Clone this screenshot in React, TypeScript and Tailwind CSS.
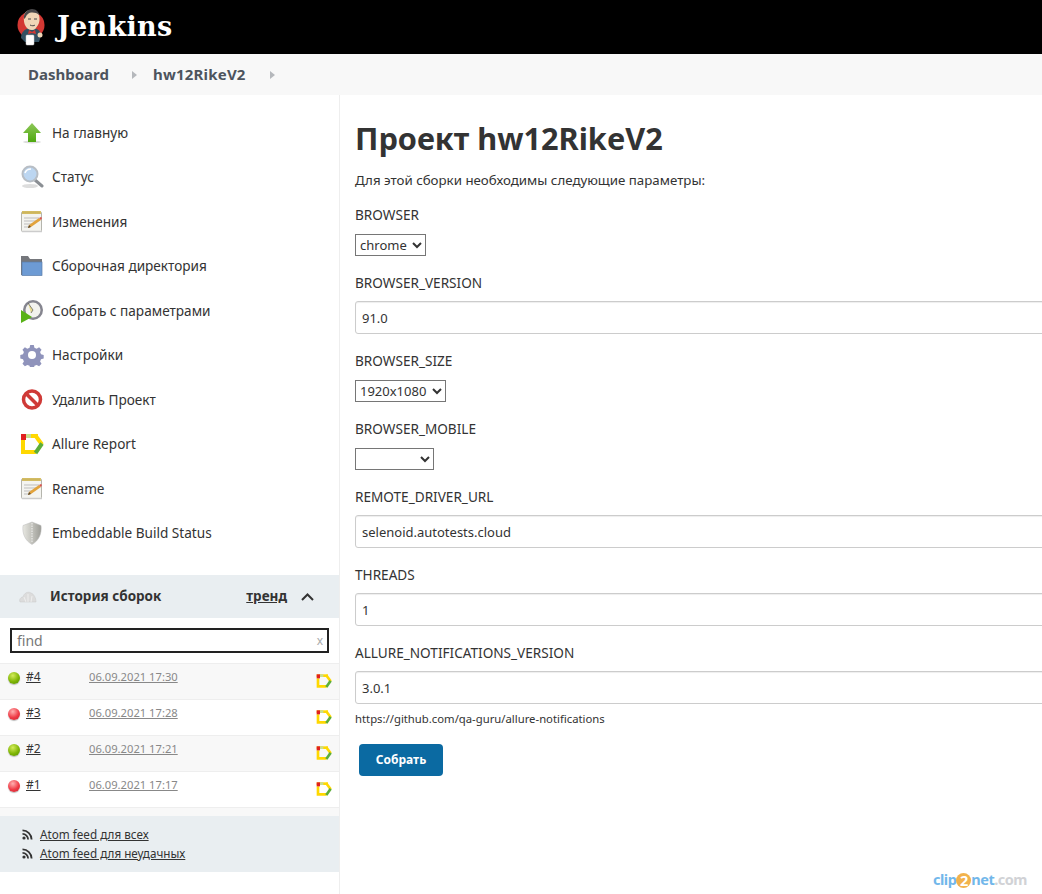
import React from "react";

const font = { fontFamily: '"Noto Sans", "Open Sans", sans-serif' };

const JenkinsLogo = () => (
  <svg width="30" height="38" viewBox="0 0 30 38">
    <circle cx="15" cy="17" r="13.5" fill="#d33833" />
    <path d="M5 30c0-6 4-9 8-10l8 1c3 2 4 4 4 7l-2 6H9z" fill="#335061" />
    <path d="M9 5c2-4 10-4 13 0 2 3 2 9 0 12-2 3-3 5-6 5-3 0-6-2-7-5-1-2-2-8 0-12z" fill="#f0d6b7" />
    <path d="M8 11C7 5 12 1 16 1c4 0 7 3 7 6-3-3-9-3-11-1-2 1-2 4-4 5z" fill="#49484a" />
    <path d="M13 22l3 2 3-2 1 4-4-1-4 1z" fill="#d33833" />
    <path d="M12 11h3M18 11h3M14 17c2 1 4 1 5 0" stroke="#49484a" strokeWidth="1" fill="none" />
    <rect x="10" y="27" width="8" height="10" rx="1" fill="#fff" stroke="#ccc" strokeWidth=".5" />
    <circle cx="24" cy="27" r="2.5" fill="#f0d6b7" />
  </svg>
);

const ArrowIcon = () => (
  <svg width="24" height="24" viewBox="0 0 24 24">
    <defs>
      <linearGradient id="arrowGrad" x1="0" y1="0" x2="0" y2="1">
        <stop offset="0" stopColor="#8fc85a" />
        <stop offset="1" stopColor="#4ea80f" />
      </linearGradient>
    </defs>
    <ellipse cx="12" cy="21" rx="9" ry="1.5" fill="#ddd" />
    <path d="M12 2l9 10h-5v9H8v-9H3z" fill="url(#arrowGrad)" />
  </svg>
);

const SearchIcon = () => (
  <svg width="24" height="24" viewBox="0 0 24 24">
    <ellipse cx="10" cy="21" rx="8" ry="2" fill="#ddd" />
    <path d="M15 15l7 6" stroke="#8b8f94" strokeWidth="3" strokeLinecap="round" />
    <circle cx="10" cy="9" r="7.5" fill="#bcd6f1" stroke="#b8bec5" strokeWidth="2" />
    <path d="M5 8c1-3 4-4 6-4" stroke="#fff" strokeWidth="1.5" fill="none" />
  </svg>
);

const NotepadIcon = () => (
  <svg width="24" height="24" viewBox="0 0 24 24">
    <rect x="1.5" y="2" width="20" height="19.500" rx="1" fill="#f4f4f0" stroke="#b5b5ad" />
    <rect x="2" y="1" width="19" height="3" fill="#d9c26a" />
    <path d="M3 1.500v2M5 1.500v2M7 1.500v2M9 1.500v2M11 1.500v2M13 1.500v2M15 1.500v2M17 1.500v2M19 1.500v2" stroke="#a8923f" strokeWidth=".5" />
    <path d="M4 8h15M4 11h12M4 14h8M4 17h6" stroke="#bdbdbd" strokeWidth="1" />
    <path d="M8 18l1-3L19 8l2 2-10 7z" fill="#e2a33c" />
    <path d="M19 8l2 2 1-2-1-1z" fill="#d9534f" />
    <path d="M8 18l1-3 2 2z" fill="#5a4a32" />
    <path d="M2 21.500h20" stroke="#ccc" strokeWidth="1.500" />
  </svg>
);

const FolderIcon = () => (
  <svg width="24" height="24" viewBox="0 0 24 24">
    <path d="M1 2h7l2 3h12v16H1z" fill="#75777c" />
    <rect x="2" y="8" width="20" height="13.500" fill="#6d9bd4" stroke="#5b7da8" strokeWidth=".7" />
  </svg>
);

const ClockIcon = () => (
  <svg width="24" height="24" viewBox="0 0 24 24">
    <circle cx="13" cy="11" r="10" fill="#85858f" />
    <circle cx="13" cy="11" r="7.5" fill="#f2f2ee" />
    <path d="M8 4l5 7-2 3" fill="#e9dc8f" stroke="#555" strokeWidth=".7" />
    <path d="M1 11l11 7-11 6z" fill="#58b217" />
  </svg>
);

const GearIcon = () => (
  <svg width="24" height="24" viewBox="0 0 24 24">
    <path
      d="M10 1h4l.7 3 2.5 1 2.700-1.600 2.700 2.800-1.600 2.600 1 2.500 3 .7v4l-3 .7-1 2.500 1.600 2.600-2.700 2.800-2.700-1.600-2.500 1-.7 3h-4l-.7-3-2.500-1-2.700 1.600-2.700-2.800 1.600-2.600-1-2.500-3-.7v-4l3-.7 1-2.500-1.600-2.600 2.700-2.800 2.700 1.600 2.500-1z"
      fill="#8f93bb"
      transform="translate(1.200 1.200) scale(.9)"
    />
    <circle cx="12" cy="12" r="4" fill="#fff" />
  </svg>
);

const NoIcon = () => (
  <svg width="24" height="24" viewBox="0 0 24 24">
    <circle cx="12" cy="11.500" r="8.500" fill="#fff" stroke="#cf3a37" strokeWidth="3.500" />
    <path d="M6 5.500l12 12" stroke="#cf3a37" strokeWidth="3.500" />
  </svg>
);

const AllureIcon = ({ size = 24 }: { size?: number }) => (
  <svg width={size} height={size} viewBox="0 0 24 24">
    <path d="M1 4h15l2 0" fill="none" stroke="#ffd800" strokeWidth="4" />
    <path d="M6 4h5" fill="none" stroke="#c9dd8e" strokeWidth="4" />
    <path d="M15 3l7 9.500" fill="none" stroke="#ffd800" strokeWidth="4" />
    <path d="M3 8v12h13" fill="none" stroke="#ffd800" strokeWidth="4" />
    <path d="M22 11.500l-6.500 9.500" fill="none" stroke="#5cae3a" strokeWidth="4" />
    <rect x="1" y="2" width="5" height="6" fill="#e02020" />
  </svg>
);

const ShieldIcon = () => (
  <svg width="24" height="24" viewBox="0 0 24 24">
    <defs>
      <linearGradient id="shieldGrad" x1="0" y1="0" x2="1" y2="0">
        <stop offset="0" stopColor="#e8e8e2" />
        <stop offset="1" stopColor="#9c9c96" />
      </linearGradient>
    </defs>
    <path d="M12 1l9 3.500c1 8-2 15-9 19-7-4-10-11-9-19z" fill="url(#shieldGrad)" stroke="#bbb" strokeWidth=".5" />
    <path d="M12 2v20" stroke="#fff" strokeWidth=".8" strokeDasharray="1.500 1" />
  </svg>
);

const CloudIcon = () => (
  <svg width="18" height="14" viewBox="0 0 18 14">
    <path d="M1 12c-1-3 1-5 3-5 1-4 5-6 8-4 3 1 5 5 5 9z" fill="#dcdcdc" stroke="#c8c8c8" strokeWidth=".5" />
    <path d="M5 7l2 5M9 4v8M13 6l-1 6" stroke="#f2f2f2" strokeWidth=".8" />
  </svg>
);

const Ball = ({ color }: { color: "green" | "red" }) => (
  <span
    className={
      color === "green"
        ? "block w-3 h-3 rounded-full bg-[radial-gradient(circle_at_40%_30%,#d4ec5a,#7fb505_55%,#4f8a00)] shadow-[0_1px_1px_#bbb]"
        : "block w-3 h-3 rounded-full bg-[radial-gradient(circle_at_40%_30%,#ffb0b0,#ef3a45_55%,#c4222c)] shadow-[0_1px_1px_#bbb]"
    }
  />
);

const RssIcon = () => (
  <svg width="11" height="11" viewBox="0 0 11 11" fill="#333">
    <circle cx="2" cy="9" r="1.600" />
    <path d="M.5 4v1.800A4.700 4.700 0 0 1 5.200 10.500H7A6.500 6.500 0 0 0 .5 4z" />
    <path d="M.5.500v1.800a8.200 8.200 0 0 1 8.200 8.200h1.800A10 10 0 0 0 .5.500z" />
  </svg>
);

const Caret = () => (
  <svg width="6" height="10" viewBox="0 0 6 10">
    <path d="M0 1l5 4-5 4z" fill="#b5b8bc" />
  </svg>
);

const tasks = [
  { label: "На главную", icon: <ArrowIcon /> },
  { label: "Статус", icon: <SearchIcon /> },
  { label: "Изменения", icon: <NotepadIcon /> },
  { label: "Сборочная директория", icon: <FolderIcon /> },
  { label: "Собрать с параметрами", icon: <ClockIcon /> },
  { label: "Настройки", icon: <GearIcon /> },
  { label: "Удалить Проект", icon: <NoIcon /> },
  { label: "Allure Report", icon: <AllureIcon /> },
  { label: "Rename", icon: <NotepadIcon /> },
  { label: "Embeddable Build Status", icon: <ShieldIcon /> },
];

const builds: { id: string; date: string; color: "green" | "red" }[] = [
  { id: "#4", date: "06.09.2021 17:30", color: "green" },
  { id: "#3", date: "06.09.2021 17:28", color: "red" },
  { id: "#2", date: "06.09.2021 17:21", color: "green" },
  { id: "#1", date: "06.09.2021 17:17", color: "red" },
];

const Label = ({ text }: { text: string }) => (
  <div className="h-[20px] leading-[20px] text-[13.6px] text-[#333]">{text}</div>
);

const TextParam = ({ name, value }: { name: string; value: string }) => (
  <div className="mb-[17px]">
    <Label text={name} />
    <input
      readOnly
      value={value}
      className="mt-[8px] block w-[800px] h-[33px] px-[6px] text-[13px] text-[#333] border border-[#ccc] rounded-[3px] shadow-[inset_0_1px_1px_#eee]"
    />
  </div>
);

const SelectParam = ({ name, width, options }: { name: string; width: string; options: string[] }) => (
  <div className="mb-[17px]">
    <Label text={name} />
    <select
      className={width + " mt-[9px] block h-[22px] text-[13px] text-[#333] border border-[#767676] bg-white"}
      defaultValue={options[0]}
    >
      {options.map((o) => (
        <option key={o}>{o}</option>
      ))}
    </select>
  </div>
);

export default function App() {
  return (
    <div style={font} className="w-[1042px] h-[894px] overflow-hidden bg-white text-[#333]">
      <header className="h-[54px] bg-black flex items-center pl-[16px]">
        <JenkinsLogo />
        <span
          className="ml-[11px] text-white font-bold text-[27px] tracking-[0.3px]"
          style={{ fontFamily: '"DejaVu Serif", "Liberation Serif", serif' }}
        >
          Jenkins
        </span>
      </header>

      <nav className="h-[41px] bg-[#f8f8f8] flex items-center pl-[28px] text-[15px] font-bold text-[#4d545d]">
        <span>Dashboard</span>
        <span className="ml-[23px]">
          <Caret />
        </span>
        <span className="ml-[15px] tracking-[0.2px]">hw12RikeV2</span>
        <span className="ml-[24px]">
          <Caret />
        </span>
      </nav>

      <div className="flex h-[799px]">
        <aside className="w-[340px] shrink-0 border-r border-[#eee]">
          <div className="pt-[15.5px]">
            {tasks.map((t) => (
              <div key={t.label} className="h-[44.5px] flex items-center pl-[20px]">
                <span className="w-[24px] h-[24px] flex items-center justify-center">{t.icon}</span>
                <span className="ml-[8px] text-[13.6px] text-[#333]">{t.label}</span>
              </div>
            ))}
          </div>

          <div className="mt-[19.5px] h-[43px] bg-[#e9eef1] flex items-center pl-[19px] pr-[25px]">
            <CloudIcon />
            <span className="ml-[13px] text-[13.5px] font-bold text-[#333]">История сборок</span>
            <span className="ml-auto text-[13.5px] font-bold underline text-[#333]">тренд</span>
            <svg className="ml-[14px]" width="13" height="8" viewBox="0 0 13 8">
              <path d="M1 7l5.500-5.500L12 7" fill="none" stroke="#333" strokeWidth="2" />
            </svg>
          </div>

          <div className="h-[45px] flex items-center px-[10px]">
            <div className="w-full h-[25px] border-2 border-[#222] flex items-center justify-between pl-[5px] pr-[4px] text-[14px] text-[#777]">
              <span>find</span>
              <span className="text-[12px] text-[#aaa]">x</span>
            </div>
          </div>

          <div className="border-t border-[#eee]">
            {builds.map((b, i) => (
              <div
                key={b.id}
                className={
                  "h-[36px] flex pl-[8px] pr-[7px] border-b border-[#eee] " + (i % 2 === 0 ? "bg-[#f8f8f8]" : "bg-white")
                }
              >
                <span className="pt-[8px]">
                  <Ball color={b.color} />
                </span>
                <span className="ml-[6px] w-[63px] pt-[4px] text-[12px] underline text-[#333]">{b.id}</span>
                <span className="pt-[4px] text-[11.2px] leading-[18px] underline text-[#888]">{b.date}</span>
                <span className="ml-auto pt-[9px]">
                  <AllureIcon size={16} />
                </span>
              </div>
            ))}
          </div>

          <div className="h-[8px] bg-[#f8f8f8]" />
          <div className="h-[56px] bg-[#e9eef1] pl-[22px] pt-[9px] text-[11.7px] text-[#333]">
            <div className="h-[19px] flex items-center">
              <RssIcon />
              <span className="ml-[7px] underline">Atom feed для всех</span>
            </div>
            <div className="h-[19px] flex items-center">
              <RssIcon />
              <span className="ml-[7px] underline">Atom feed для неудачных</span>
            </div>
          </div>
        </aside>

        <main className="flex-1 min-w-0 overflow-hidden pl-[15px] relative">
          <h1 className="mt-[22px] text-[30.7px] leading-[42px] font-bold text-[#333]">Проект hw12RikeV2</h1>
          <p className="mt-[12px] mb-[16px] text-[13.3px] leading-[18px] text-[#333]">
            Для этой сборки необходимы следующие параметры:
          </p>
          <SelectParam name="BROWSER" width="w-[71px]" options={["chrome"]} />
          <TextParam name="BROWSER_VERSION" value="91.0" />
          <SelectParam name="BROWSER_SIZE" width="w-[91px]" options={["1920x1080"]} />
          <SelectParam name="BROWSER_MOBILE" width="w-[79px]" options={[""]} />
          <TextParam name="REMOTE_DRIVER_URL" value="selenoid.autotests.cloud" />
          <TextParam name="THREADS" value="1" />
          <div>
            <Label text="ALLURE_NOTIFICATIONS_VERSION" />
            <input
              readOnly
              value="3.0.1"
              className="mt-[8px] block w-[800px] h-[33px] px-[6px] text-[13px] text-[#333] border border-[#ccc] rounded-[3px] shadow-[inset_0_1px_1px_#eee]"
            />
            <div className="mt-[6px] h-[18px] leading-[18px] text-[11.3px] text-[#333]">
              https://github.com/qa-guru/allure-notifications
            </div>
          </div>
          <button className="mt-[16px] ml-[4px] w-[84px] h-[32px] bg-[#0b6aa2] rounded-[4px] text-white text-[12px] font-bold">
            Собрать
          </button>
          <div className="absolute right-[15px] bottom-[3px] flex items-center text-[14.5px] font-bold tracking-[-0.5px] text-[#4ea6e6] opacity-80">
            <span>clip</span>
            <span className="w-[15px] h-[15px] rounded-full bg-[#f0a020] text-white text-center leading-[15px]">2</span>
            <span>net</span>
            <span className="text-[#c6c8cc]">.com</span>
          </div>
        </main>
      </div>
    </div>
  );
}
